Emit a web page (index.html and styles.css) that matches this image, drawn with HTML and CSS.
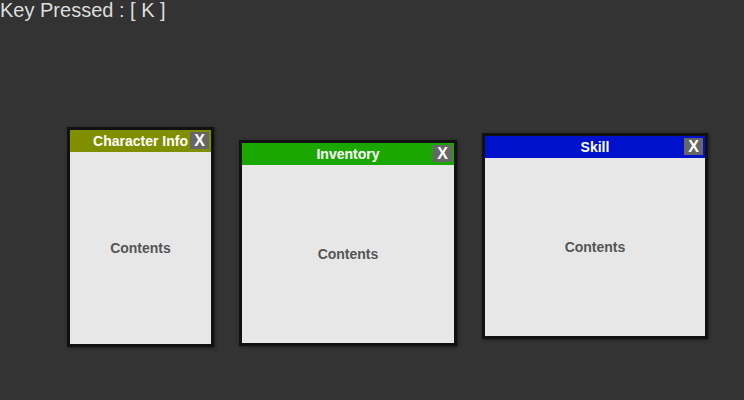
FILE: index.html
```html
<!DOCTYPE html>
<html>
<head>
<meta charset="utf-8">
<link rel="stylesheet" href="styles.css">
</head>
<body>
<div class="status">Key Pressed : [ K ]</div>
<div class="desktop">
  <div class="window win-char">
    <div class="titlebar">Character Info<span class="close">X</span></div>
    <div class="contents">Contents</div>
  </div>
  <div class="window win-inv">
    <div class="titlebar">Inventory<span class="close">X</span></div>
    <div class="contents">Contents</div>
  </div>
  <div class="window win-skill">
    <div class="titlebar">Skill<span class="close">X</span></div>
    <div class="contents">Contents</div>
  </div>
</div>
</body>
</html>
```
FILE: styles.css
```css
html, body {
  margin: 0;
  padding: 0;
  background: #333333;
  width: 744px;
  height: 400px;
  overflow: hidden;
}
.status {
  font-family: "Liberation Sans", Arial, sans-serif;
  font-size: 20px;
  line-height: 20px;
  color: #dedede;
  white-space: nowrap;
}
.desktop {
  position: relative;
  width: 744px;
  height: 380px;
}
.window {
  position: absolute;
  border: 3px solid #111111;
  box-shadow: 1px 1px 3px rgba(0, 0, 0, 0.45);
  display: flex;
  flex-direction: column;
  background: #e7e7e7;
  font-family: "Liberation Sans", Arial, sans-serif;
}
.win-char { left: 67px; top: 107px; width: 141px; height: 214px; }
.win-inv { left: 239px; top: 120px; width: 212px; height: 200px; }
.win-skill { left: 482px; top: 113px; width: 220px; height: 200px; }
.win-char .titlebar { background: #7f8f00; }
.win-inv .titlebar { background: #1aa700; }
.win-skill .titlebar { background: #0011cc; }
.titlebar {
  position: relative;
  height: 22px;
  flex: none;
  display: flex;
  align-items: center;
  justify-content: center;
  color: #ffffff;
  font-weight: bold;
  font-size: 14px;
  white-space: nowrap;
}
.close {
  position: absolute;
  right: 2px;
  top: 2px;
  width: 19px;
  height: 17px;
  background: #666666;
  color: #ffffff;
  font-weight: bold;
  font-size: 16px;
  line-height: 17px;
  text-align: center;
}
.contents {
  flex: 1;
  display: flex;
  align-items: center;
  justify-content: center;
  color: #555555;
  font-weight: bold;
  font-size: 14px;
}
```
